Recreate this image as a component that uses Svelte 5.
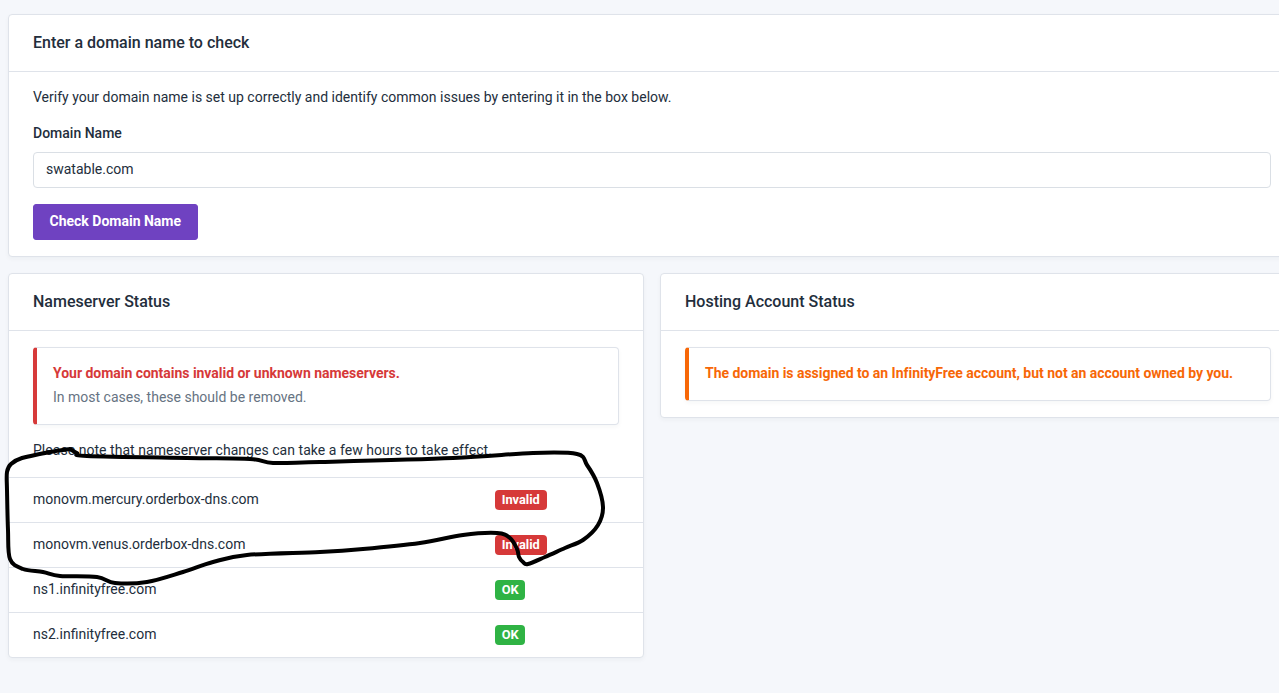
<script>
	const nameservers = [
		{ host: 'monovm.mercury.orderbox-dns.com', ok: false },
		{ host: 'monovm.venus.orderbox-dns.com', ok: false },
		{ host: 'ns1.infinityfree.com', ok: true },
		{ host: 'ns2.infinityfree.com', ok: true }
	];

	// hand drawn marker loop on top of the screenshot
	const points = [
		[70, 449], [50, 452], [22, 458], [11, 464], [7, 472], [7, 490], [8, 530], [10, 559], [23, 569],
		[43, 572], [60, 576], [97, 577], [115, 583], [147, 582], [183, 572], [213, 562], [247, 555],
		[320, 552], [363, 549], [420, 543], [463, 535], [497, 533], [510, 538], [517, 549], [519, 557],
		[523, 562], [528, 564], [545, 557], [565, 548], [583, 540], [598, 525], [603, 507], [597, 483], [587, 465], [577, 454], [533, 453],
		[453, 458], [320, 462], [273, 463], [250, 459], [187, 458], [87, 456], [77, 453], [70, 449]
	];

	function smooth(pts) {
		let d = `M${pts[0][0]} ${pts[0][1]}`;
		for (let i = 0; i < pts.length - 1; i++) {
			const p0 = pts[i - 1] || pts[i];
			const p1 = pts[i];
			const p2 = pts[i + 1];
			const p3 = pts[i + 2] || p2;
			const c1x = p1[0] + (p2[0] - p0[0]) / 6;
			const c1y = p1[1] + (p2[1] - p0[1]) / 6;
			const c2x = p2[0] - (p3[0] - p1[0]) / 6;
			const c2y = p2[1] - (p3[1] - p1[1]) / 6;
			d += ` C${c1x.toFixed(1)} ${c1y.toFixed(1)} ${c2x.toFixed(1)} ${c2y.toFixed(1)} ${p2[0]} ${p2[1]}`;
		}
		return d;
	}

	const scribble = smooth(points);
</script>

<div class="page">
	<section class="card">
		<h3 class="cardHeader">Enter a domain name to check</h3>
		<div class="cardBody">
			<p>Verify your domain name is set up correctly and identify common issues by entering it in the box below.</p>
			<label for="domain">Domain Name</label>
			<input id="domain" type="text" value="swatable.com" />
			<button type="button">Check Domain Name</button>
		</div>
	</section>

	<div class="columns">
		<section class="card">
			<h3 class="cardHeader">Nameserver Status</h3>
			<div class="cardBody">
				<div class="alert danger">
					<h4>Your domain contains invalid or unknown nameservers.</h4>
					<div class="muted">In most cases, these should be removed.</div>
				</div>
				<p class="note">Please note that nameserver changes can take a few hours to take effect.</p>
			</div>
			<table>
				<tbody>
					{#each nameservers as ns}
						<tr>
							<td class="host">{ns.host}</td>
							<td>
								<span class="badge" class:ok={ns.ok}>{ns.ok ? 'OK' : 'Invalid'}</span>
							</td>
						</tr>
					{/each}
				</tbody>
			</table>
		</section>

		<section class="card shortCard">
			<h3 class="cardHeader">Hosting Account Status</h3>
			<div class="cardBody">
				<div class="alert warning">
					<h4>The domain is assigned to an InfinityFree account, but not an account owned by you.</h4>
				</div>
			</div>
		</section>
	</div>

	<svg class="scribble" width="1279" height="693" aria-hidden="true">
		<path d={scribble} />
	</svg>
</div>

<style>
	:global(body) {
		margin: 0;
		background: #f5f7fb;
		overflow: hidden;
	}

	.page {
		position: relative;
		box-sizing: border-box;
		width: 1304px;
		height: 693px;
		padding: 14px 8px 0 8px;
		font-family: Roboto, "Liberation Sans", sans-serif;
		font-size: 14px;
		line-height: 20px;
		color: #232e3c;
	}

	.card {
		background: #fff;
		border: 1px solid #dfe3ea;
		border-radius: 4px;
		box-shadow: 0 2px 4px rgba(35, 46, 60, 0.04);
	}

	.cardHeader {
		margin: 0;
		height: 56px;
		padding: 0 24px;
		display: flex;
		align-items: center;
		border-bottom: 1px solid #dfe3ea;
		font-size: 16px;
		font-weight: 500;
		line-height: 24px;
	}

	.cardBody {
		padding: 16px 24px;
	}

	/* 18px line + 2px under it keeps the 20px rhythm, text sits 1px higher */
	p, label, .muted, .alert h4 {
		line-height: 18px;
		padding-bottom: 2px;
	}

	p {
		margin: 0 0 16px 0;
	}

	label {
		display: block;
		margin-bottom: 8px;
		font-weight: 500;
	}

	input {
		display: block;
		box-sizing: border-box;
		width: 100%;
		height: 36px;
		margin-bottom: 16px;
		padding: 0 12px 2px 12px;
		background: #fff;
		border: 1px solid #dadfe5;
		border-radius: 4px;
		font: inherit;
		color: #232e3c;
	}

	button {
		display: block;
		box-sizing: border-box;
		height: 36px;
		padding: 0 15.5px 2px 15.5px;
		background: #6f42c1;
		border: 1px solid #6f42c1;
		border-radius: 3px;
		color: #fff;
		font: inherit;
		font-weight: 700;
	}

	.columns {
		display: grid;
		grid-template-columns: 636px 636px;
		gap: 16px;
		align-items: start;
		margin-top: 16px;
	}

	.alert {
		padding: 16px;
		border: 1px solid #dfe3ea;
		border-left-width: 4px;
		border-radius: 4px;
		box-shadow: 0 2px 4px rgba(35, 46, 60, 0.04);
	}

	.alert h4 {
		margin: 0;
		font-size: 14px;
		font-weight: 700;
		letter-spacing: -0.03px;
	}

	.danger {
		border-left-color: #d63939;
		margin-bottom: 16px;
	}

	.danger h4 {
		color: #d63939;
		margin-bottom: 4px;
	}

	.warning {
		border-left-color: #f76707;
	}

	.warning h4 {
		color: #f76707;
	}

	.muted {
		color: #667382;
	}

	.note {
		margin: 0;
		letter-spacing: 0.04px;
	}

	table {
		width: 100%;
		border-collapse: collapse;
	}

	td {
		height: 42px;
		padding: 0 0 2px 0;
		border-top: 1px solid #dfe3ea;
		vertical-align: middle;
	}

	.host {
		width: 462px;
		padding-left: 24px;
	}

	.badge {
		display: inline-block;
		padding: 0 6.7px;
		height: 20px;
		line-height: 20px;
		vertical-align: middle;
		background: #d63939;
		border-radius: 4px;
		color: #fff;
		font-size: 12.8px;
		font-weight: 700;
	}

	.badge.ok {
		background: #2fb344;
	}

	.scribble {
		position: absolute;
		left: 0;
		top: 0;
		pointer-events: none;
	}

	.scribble path {
		fill: none;
		stroke: #000;
		stroke-width: 4px;
		stroke-linecap: round;
		stroke-linejoin: round;
	}
</style>
